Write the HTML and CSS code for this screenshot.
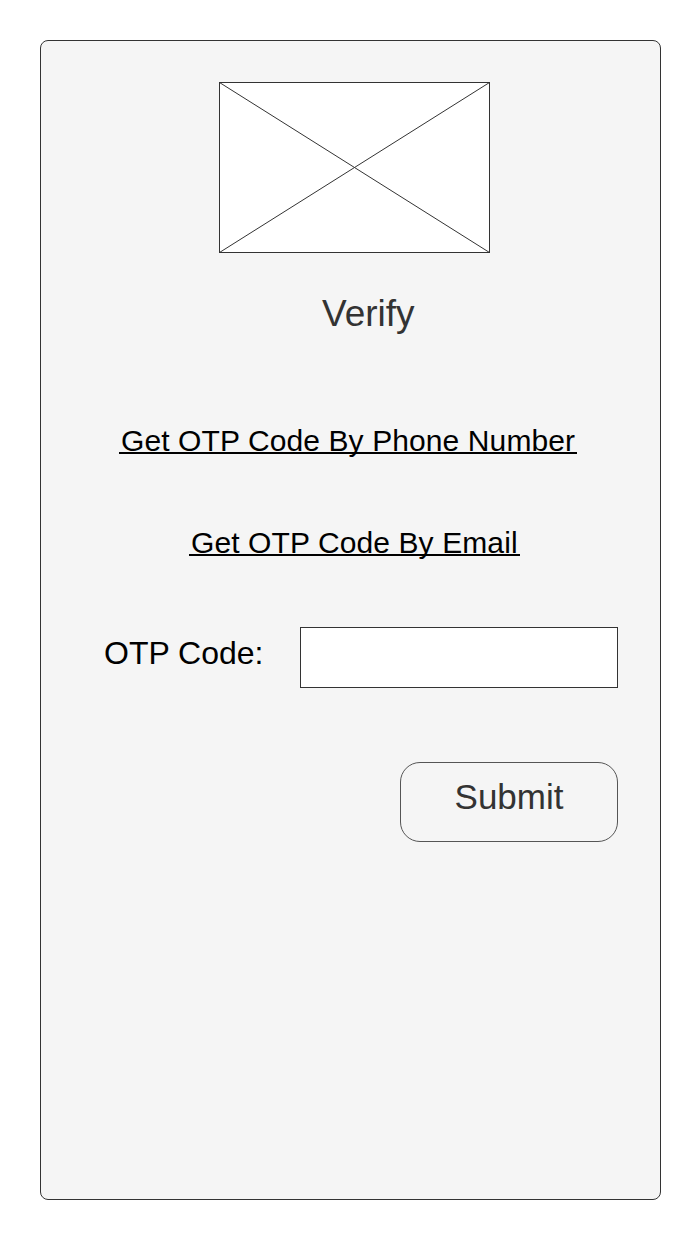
FILE: index.html
```html
<!DOCTYPE html>
<html lang="en">
<head>
<meta charset="utf-8">
<title>Verify</title>
<link rel="stylesheet" href="styles.css">
</head>
<body>
<div class="card">
  <svg class="placeholder" width="271" height="171" viewBox="0 0 271 171" aria-hidden="true">
    <rect x="0.5" y="0.5" width="270" height="170" fill="#ffffff" stroke="#333333" stroke-width="1"/>
    <line x1="0.5" y1="0.5" x2="270.5" y2="170.5" stroke="#333333" stroke-width="1"/>
    <line x1="0.5" y1="170.5" x2="270.5" y2="0.5" stroke="#333333" stroke-width="1"/>
  </svg>
  <div class="title">Verify</div>
  <a class="link link-phone" href="#">Get OTP Code By Phone Number</a>
  <a class="link link-email" href="#">Get OTP Code By Email</a>
  <div class="otp-row">
    <label class="otp-label" for="otp">OTP Code:</label>
    <input class="otp-input" id="otp" type="text">
  </div>
  <div class="submit">Submit</div>
</div>
</body>
</html>
```

FILE: styles.css
```css
html, body {
  margin: 0;
  padding: 0;
  background: #ffffff;
}

body {
  font-family: "Liberation Sans", Arial, sans-serif;
}

.card {
  box-sizing: border-box;
  margin: 40px 0 0 40px;
  width: 621px;
  height: 1160px;
  background: #f5f5f5;
  border: 1px solid #333333;
  border-radius: 8px;
  display: flex;
  flex-direction: column;
  align-items: flex-start;
}

.placeholder {
  display: block;
  margin: 41px 0 0 178px;
}

.title {
  margin: 41px 0 0 281px;
  font-size: 37px;
  line-height: 40px;
  color: #333333;
}

.link {
  display: inline-block;
  font-size: 30px;
  line-height: 23px;
  letter-spacing: 0.1px;
  color: #000000;
  text-decoration: none;
  padding: 0 2px;
  border-bottom: 2px solid #000000;
}

.link-phone {
  margin: 95px 0 0 78px;
}

.link-email {
  margin: 77px 0 0 148px;
}

.otp-row {
  align-self: stretch;
  display: flex;
  align-items: flex-start;
  margin-top: 71px;
}

.otp-label {
  margin: 6px 0 0 63px;
  font-size: 32px;
  line-height: 40px;
  color: #000000;
}

.otp-input {
  box-sizing: border-box;
  margin: 0 42px 0 auto;
  width: 318px;
  height: 61px;
  border: 1px solid #333333;
  border-radius: 0;
  background: #ffffff;
  padding: 0 8px;
  font: inherit;
  outline: none;
}

.submit {
  box-sizing: border-box;
  align-self: flex-end;
  margin: 74px 42px 0 0;
  width: 218px;
  height: 80px;
  padding-top: 14px;
  border: 1px solid #555555;
  border-radius: 20px;
  font-size: 35px;
  line-height: 40px;
  color: #333333;
  text-align: center;
}
```
